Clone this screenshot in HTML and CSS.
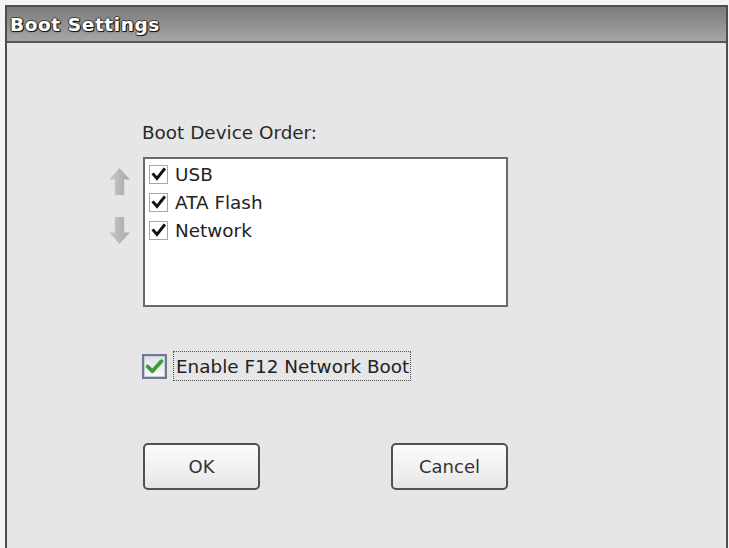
FILE: index.html
```html
<!DOCTYPE html>
<html>
<head>
<meta charset="utf-8">
<title>Boot Settings</title>
<link rel="stylesheet" href="styles.css">
</head>
<body>
<div class="window">
  <div class="titlebar"><span class="title">Boot Settings</span></div>
  <div class="content">
    <div class="label">Boot Device Order:</div>

    <div class="arrows">
      <svg class="arrow" width="21" height="27" viewBox="0 0 20 26">
        <defs><linearGradient id="ag" x1="0" y1="0" x2="1" y2="0"><stop offset="0" stop-color="#c8c8c8"/><stop offset="1" stop-color="#a8a8a8"/></linearGradient></defs>
        <polygon points="10,0 20,11 14.5,11 14.5,26 5.5,26 5.5,11 0,11" fill="url(#ag)"/>
      </svg>
      <svg class="arrow" width="21" height="27" viewBox="0 0 20 26">
        <polygon points="10,26 20,15 14.5,15 14.5,0 5.5,0 5.5,15 0,15" fill="url(#ag)"/>
      </svg>
    </div>
    <div class="listbox">
      <div class="item"><span class="cb"><svg width="17" height="17" viewBox="0 0 17 17"><path d="M3.5 8.5 L7 12.5 L14 3.5" fill="none" stroke="#111" stroke-width="3" stroke-linecap="square"/></svg></span><span>USB</span></div>
      <div class="item"><span class="cb"><svg width="17" height="17" viewBox="0 0 17 17"><path d="M3.5 8.5 L7 12.5 L14 3.5" fill="none" stroke="#111" stroke-width="3" stroke-linecap="square"/></svg></span><span>ATA Flash</span></div>
      <div class="item"><span class="cb"><svg width="17" height="17" viewBox="0 0 17 17"><path d="M3.5 8.5 L7 12.5 L14 3.5" fill="none" stroke="#111" stroke-width="3" stroke-linecap="square"/></svg></span><span>Network</span></div>
    </div>

    <div class="f12">
      <span class="gcb"><svg width="19" height="19" viewBox="0 0 18 18"><path d="M2.5 9 L7 13.5 L15.5 4" fill="none" stroke="#3a9c3a" stroke-width="3.6" stroke-linecap="round" stroke-linejoin="round"/></svg></span>
      <span class="focus">Enable F12 Network Boot</span>
    </div>

    <div class="buttons">
      <button class="btn">OK</button>
      <button class="btn">Cancel</button>
    </div>
  </div>
</div>
</body>
</html>
```

FILE: styles.css
```css
html, body {
  margin: 0;
  padding: 0;
  height: 100%;
  overflow: hidden;
  background: #f4f4f4;
  font-family: "DejaVu Sans", Verdana, sans-serif;
  color: #222;
}

.window {
  margin: 5px 1px 0 5px;
  height: calc(100% - 5px);
  box-sizing: border-box;
  border: 2px solid #4e4e4e;
  border-bottom: none;
  background: #e6e6e6;
  display: flex;
  flex-direction: column;
}

.titlebar {
  height: 34px;
  border-bottom: 2px solid #555;
  background: linear-gradient(#7c7c7c, #8e8e8e 45%, #a6a6a6);
  display: flex;
  align-items: center;
  padding-left: 3px;
}

.title {
  font-weight: bold;
  font-size: 18.5px;
  letter-spacing: 0.6px;
  color: #fff;
  text-shadow: 1px 1px 0 #1a1a1a, -1px 0 0 #333, 0 -1px 0 #444, 1px 0 1px #1a1a1a, 0 1px 1px #1a1a1a;
}

.content {
  display: grid;
  grid-template-columns: 33px 365px;
  padding: 79px 0 0 103px;
}

.label {
  grid-column: 2;
  font-size: 18.4px;
  line-height: 22px;
  margin-left: -1px;
  margin-bottom: 13px;
  color: #2a2a2a;
}

.arrows {
  grid-column: 1;
  display: flex;
  flex-direction: column;
  gap: 22px;
  padding-top: 11px;
  margin-left: -1px;
}

.arrow { display: block; }

.listbox {
  grid-column: 2;
  height: 150px;
  box-sizing: border-box;
  border: 2px solid #6a6a6a;
  background: #fff;
  padding-top: 1px;
}

.item {
  height: 28px;
  display: flex;
  align-items: center;
  padding-left: 4px;
  font-size: 18.4px;
  color: #222;
}

.cb {
  width: 19px;
  height: 19px;
  box-sizing: border-box;
  border: 1px solid #a6a6a6;
  background: #fff;
  display: flex;
  align-items: center;
  justify-content: center;
  margin-right: 7px;
}

.f12 {
  grid-column: 2;
  margin-top: 44px;
  margin-left: -1px;
  height: 30px;
  display: flex;
  align-items: center;
}

.gcb {
  width: 25px;
  height: 25px;
  box-sizing: border-box;
  border: 2px solid #6c7a92;
  background: linear-gradient(#dfe3e8, #f7f8fa);
  box-shadow: inset 0 0 0 1px #c9ced6;
  display: flex;
  align-items: center;
  justify-content: center;
  margin-right: 6px;
}

.focus {
  border: 1px dotted #555;
  height: 30px;
  box-sizing: border-box;
  display: flex;
  align-items: center;
  padding: 0 1px 0 2px;
  font-size: 18.4px;
  color: #222;
}

.buttons {
  grid-column: 2;
  margin-top: 62px;
  display: flex;
  justify-content: space-between;
}

.btn {
  width: 117px;
  height: 47px;
  box-sizing: border-box;
  border: 2px solid #4c525a;
  border-radius: 5px;
  background: linear-gradient(#fbfbfb, #f0f0f0 60%, #e6e6e6);
  font-family: "DejaVu Sans", Verdana, sans-serif;
  font-size: 18px;
  color: #333;
  padding: 0;
}
```
